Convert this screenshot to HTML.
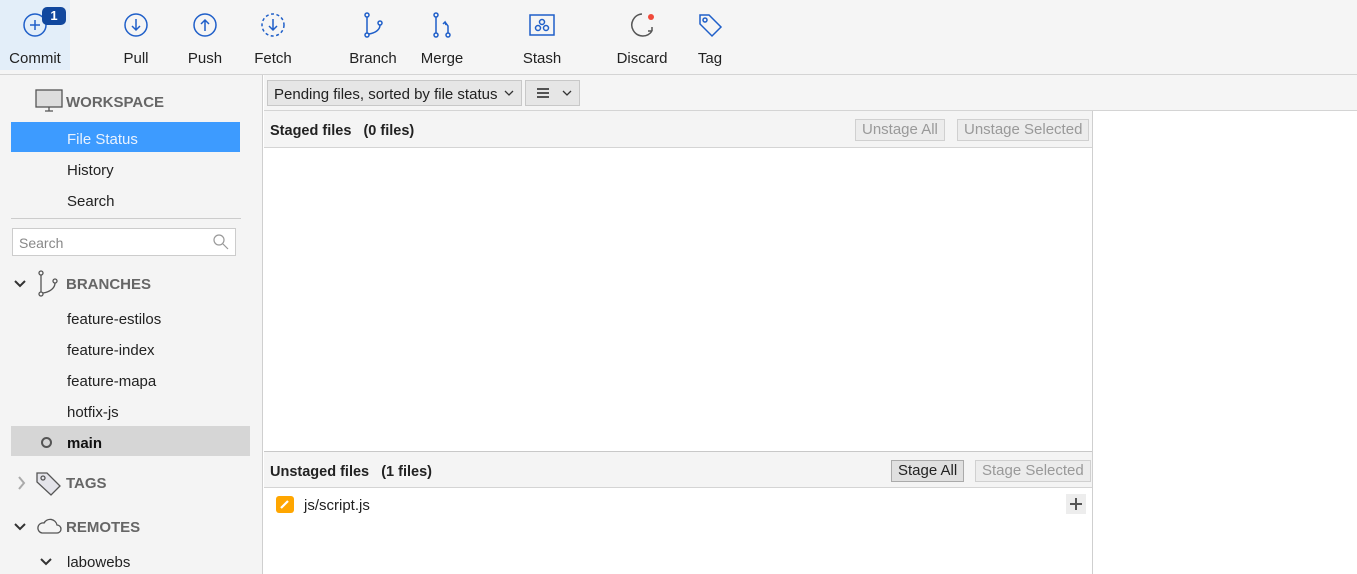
<!DOCTYPE html>
<html><head><meta charset="utf-8"><style>
*{margin:0;padding:0;box-sizing:border-box}
body{width:1357px;height:573px;overflow:hidden;background:#fff;font-family:"Liberation Sans",sans-serif;font-size:15px;color:#222;position:relative}
.a{position:absolute;white-space:nowrap}
div.a{margin-top:1px}
.tb{left:0;top:-1px;width:1357px;height:75px;background:#f5f5f5;border-bottom:1px solid #d4d4d4}
.lbl{top:49px;font-size:15px;color:#222;transform:translateX(-50%)}
.ic{top:11px}
.sb{left:0;top:74px;width:263px;height:499px;background:#f4f4f4;border-right:1px solid #cfcfcf}
.hd{font-weight:bold;color:#666;font-size:15px}
.btn{border:1px solid #d0d0d0;background:#ececec;color:#999;font-size:15px;height:22px;line-height:20px;padding:0 6px}
</style></head><body>
<div class="a tb"></div>
<div class="a" style="left:0;top:-1px;width:70px;height:70px;background:#e3eef9"></div>
<svg class="a ic" style="left:21px" width="28" height="28" viewBox="0 0 28 28" fill="none" stroke="#1f5fc9" stroke-width="1.5"><circle cx="14" cy="14" r="11"/><path d="M14 9v10M9 14h10"/></svg>
<div class="a" style="left:42px;top:6px;width:24px;height:18px;background:#10479e;border-radius:5px;color:#fff;font-weight:bold;font-size:13px;text-align:center;line-height:18px">1</div>
<div class="a lbl" style="left:35px">Commit</div>
<svg class="a ic" style="left:122px" width="28" height="28" viewBox="0 0 28 28" fill="none" stroke="#1f5fc9" stroke-width="1.5"><circle cx="14" cy="14" r="11"/><path d="M14 8v11M10 15l4 4 4-4"/></svg>
<div class="a lbl" style="left:136px">Pull</div>
<svg class="a ic" style="left:191px" width="28" height="28" viewBox="0 0 28 28" fill="none" stroke="#1f5fc9" stroke-width="1.5"><circle cx="14" cy="14" r="11"/><path d="M14 20V9M10 13l4-4 4 4"/></svg>
<div class="a lbl" style="left:205px">Push</div>
<svg class="a ic" style="left:259px" width="28" height="28" viewBox="0 0 28 28" fill="none" stroke="#1f5fc9" stroke-width="1.5"><circle cx="14" cy="14" r="11" stroke-dasharray="3 2.5"/><path d="M14 8v11M10 15l4 4 4-4"/></svg>
<div class="a lbl" style="left:273px">Fetch</div>
<svg class="a ic" style="left:359px" width="28" height="28" viewBox="0 0 28 28" fill="none" stroke="#1f5fc9" stroke-width="1.5"><circle cx="8" cy="4" r="2"/><circle cx="8" cy="24" r="2"/><circle cx="21" cy="12" r="2"/><path d="M8 6v16M21 14c0 5-5 8-11 9"/></svg>
<div class="a lbl" style="left:373px">Branch</div>
<svg class="a ic" style="left:428px" width="28" height="28" viewBox="0 0 28 28" fill="none" stroke="#1f5fc9" stroke-width="1.5"><circle cx="8" cy="4" r="2"/><circle cx="8" cy="24" r="2"/><circle cx="20" cy="24" r="2"/><path d="M8 6v16M20 22v-7l-3-4M15 13l2-2 1 3"/></svg>
<div class="a lbl" style="left:442px">Merge</div>
<svg class="a ic" style="left:528px" width="28" height="28" viewBox="0 0 28 28" fill="none" stroke="#1f5fc9" stroke-width="1.5"><rect x="2" y="4" width="24" height="20"/><circle cx="14" cy="11" r="2.5"/><circle cx="10" cy="17" r="2.5"/><circle cx="18" cy="17" r="2.5"/></svg>
<div class="a lbl" style="left:542px">Stash</div>
<svg class="a ic" style="left:628px" width="28" height="28" viewBox="0 0 28 28" fill="none" stroke="#555" stroke-width="1.5"><path d="M14 3A11 11 0 1 0 24 20M24 20l-4 0M24 20v-4"/><circle cx="23" cy="6" r="3" fill="#f04a3a" stroke="none"/></svg>
<div class="a lbl" style="left:642px">Discard</div>
<svg class="a ic" style="left:696px" width="28" height="28" viewBox="0 0 28 28" fill="none" stroke="#1f5fc9" stroke-width="1.5"><path d="M4 4h9l12 12-9 9L4 13z"/><circle cx="9" cy="9" r="2"/></svg>
<div class="a lbl" style="left:710px">Tag</div>

<div class="a sb"></div>
<svg class="a" style="left:35px;top:89px" width="28" height="24" viewBox="0 0 28 24" fill="none" stroke="#555" stroke-width="1.3"><rect x="1" y="1" width="26" height="17" fill="#ddd"/><path d="M10 22h8M14 18v4"/></svg>
<div class="a hd" style="left:66px;top:93px">WORKSPACE</div>
<div class="a" style="left:11px;top:121px;width:229px;height:30px;background:#3d9bff"></div>
<div class="a" style="left:67px;top:130px;color:#e8f2ff">File Status</div>
<div class="a" style="left:67px;top:161px">History</div>
<div class="a" style="left:67px;top:192px">Search</div>
<div class="a" style="left:11px;top:217px;width:230px;height:1px;background:#ccc"></div>
<div class="a" style="left:12px;top:227px;width:224px;height:28px;background:#fff;border:1px solid #ccc"></div>
<div class="a" style="left:19px;top:234px;color:#888;font-size:14px">Search</div>
<svg class="a" style="left:212px;top:233px" width="18" height="18" fill="none" stroke="#999" stroke-width="1.2"><circle cx="7" cy="7" r="5"/><path d="M11 11l5 5"/></svg>
<svg class="a" style="left:14px;top:279px" width="12" height="10" fill="none" stroke="#333" stroke-width="2"><path d="M1 2l5 5 5-5"/></svg>
<svg class="a" style="left:36px;top:270px" width="24" height="28" fill="none" stroke="#555" stroke-width="1.3"><circle cx="5" cy="3" r="2"/><circle cx="5" cy="24" r="2"/><circle cx="19" cy="11" r="2"/><path d="M5 5v17M19 13c0 5-5 9-12 10"/></svg>
<div class="a hd" style="left:66px;top:275px">BRANCHES</div>
<div class="a" style="left:67px;top:310px">feature-estilos</div>
<div class="a" style="left:67px;top:341px">feature-index</div>
<div class="a" style="left:67px;top:372px">feature-mapa</div>
<div class="a" style="left:67px;top:403px">hotfix-js</div>
<div class="a" style="left:11px;top:425px;width:239px;height:30px;background:#d6d6d6"></div>
<div class="a" style="left:41px;top:436px;width:11px;height:11px;border:2.5px solid #555;border-radius:50%"></div>
<div class="a" style="left:67px;top:434px;font-weight:bold;color:#111">main</div>
<svg class="a" style="left:17px;top:476px" width="10" height="14" fill="none" stroke="#aaa" stroke-width="2"><path d="M2 1l5 6-5 6"/></svg>
<svg class="a" style="left:35px;top:470px" width="28" height="28" fill="none" stroke="#555" stroke-width="1.3"><path d="M2 3h10l13 13-9 9L2 12z" fill="#e4e4ea"/><circle cx="8" cy="8" r="2"/></svg>
<div class="a hd" style="left:66px;top:474px">TAGS</div>
<svg class="a" style="left:14px;top:522px" width="12" height="10" fill="none" stroke="#333" stroke-width="2"><path d="M1 2l5 5 5-5"/></svg>
<svg class="a" style="left:36px;top:515px" width="26" height="20" fill="none" stroke="#555" stroke-width="1.3"><path d="M6 18h15a4 4 0 0 0 0-8 7 7 0 0 0-13-2 5 5 0 0 0-2 10z"/></svg>
<div class="a hd" style="left:66px;top:518px">REMOTES</div>
<svg class="a" style="left:40px;top:557px" width="12" height="10" fill="none" stroke="#333" stroke-width="2"><path d="M1 2l5 5 5-5"/></svg>
<div class="a" style="left:67px;top:553px">labowebs</div>

<div class="a" style="left:264px;top:74px;width:1093px;height:36px;background:#f5f5f5;border-bottom:1px solid #d4d4d4"></div>
<div class="a" style="left:267px;top:79px;width:255px;height:26px;background:#e6e6e6;border:1px solid #c8c8c8"></div>
<div class="a" style="left:274px;top:85px">Pending files, sorted by file status</div>
<svg class="a" style="left:504px;top:89px" width="10" height="8" fill="none" stroke="#333" stroke-width="1.3"><path d="M1 2l4 4 4-4"/></svg>
<div class="a" style="left:525px;top:79px;width:55px;height:26px;background:#e6e6e6;border:1px solid #c8c8c8"></div>
<svg class="a" style="left:536px;top:87px" width="14" height="12" stroke="#222" stroke-width="1.4"><path d="M1 2h12M1 6h12M1 10h12"/></svg>
<svg class="a" style="left:562px;top:89px" width="10" height="8" fill="none" stroke="#333" stroke-width="1.3"><path d="M1 2l4 4 4-4"/></svg>

<div class="a" style="left:1092px;top:110px;width:1px;height:463px;background:#cfcfcf"></div>
<div class="a" style="left:264px;top:110px;width:828px;height:37px;background:#f4f4f4;border-bottom:1px solid #d4d4d4"></div>
<div class="a" style="left:270px;top:122px;font-weight:bold;font-size:14.5px">Staged files&nbsp;&nbsp;&nbsp;(0 files)</div>
<div class="a btn" style="left:855px;top:118px">Unstage All</div>
<div class="a btn" style="left:957px;top:118px">Unstage Selected</div>

<div class="a" style="left:264px;top:450px;width:828px;height:37px;background:#f4f4f4;border-top:1px solid #c8c8c8;border-bottom:1px solid #d4d4d4"></div>
<div class="a" style="left:270px;top:463px;font-weight:bold;font-size:14.5px">Unstaged files&nbsp;&nbsp;&nbsp;(1 files)</div>
<div class="a btn" style="left:891px;top:459px;color:#222;background:#e0e0e0;border-color:#aaa">Stage All</div>
<div class="a btn" style="left:975px;top:459px">Stage Selected</div>
<div class="a" style="left:276px;top:495px;width:18px;height:17px;background:#ffa600;border-radius:3px"></div>
<svg class="a" style="left:279px;top:498px" width="12" height="12" stroke="#fff" stroke-width="2.2"><path d="M2 10l7-7"/></svg>
<div class="a" style="left:304px;top:496px">js/script.js</div>
<div class="a" style="left:1066px;top:493px;width:20px;height:20px;background:#ededed"></div>
<svg class="a" style="left:1069px;top:497px" width="14" height="14" stroke="#555" stroke-width="2"><path d="M7 1v12M1 7h12"/></svg>
</body></html>
